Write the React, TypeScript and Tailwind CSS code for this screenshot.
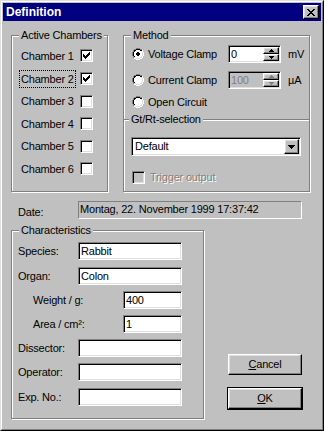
import React from 'react';

const PAL: Record<string, string> = { K: '#000000', G: '#808080', W: '#ffffff', D: '#dfdfdf', w: '#ffffff' };

function Pix({ rows, color }: { rows: string[]; color?: string }) {
  const w = rows[0].length;
  const h = rows.length;
  return (
    <svg width={w} height={h} viewBox={`0 0 ${w} ${h}`} shapeRendering="crispEdges" className="block">
      {rows.flatMap((r, y) =>
        r.split('').map((c, x) => {
          if (c === '.') return null;
          const fill = c === '#' ? color ?? '#000' : PAL[c];
          return <rect key={`${x}-${y}`} x={x} y={y} width="1" height="1" fill={fill} />;
        })
      )}
    </svg>
  );
}

const CHECK = ['......#', '.....##', '#...###', '##.###.', '#####..', '.###...', '..#....'];
const CLOSE_X = ['##....##', '.##..##.', '..####..', '...##...', '..####..', '.##..##.', '##....##'];
const UP = ['..#..', '.###.', '#####'];
const DOWN = ['#####', '.###.', '..#..'];
const COMBO_DOWN = ['#######', '.#####.', '..###..', '...#...'];

const RADIO = [
  '....GGGG....',
  '..GGKKKKGG..',
  '.GKKwwwwKKW.',
  '.GKwwwwwwDW.',
  'GKwwwwwwwwDW',
  'GKwwwwwwwwDW',
  'GKwwwwwwwwDW',
  'GKwwwwwwwwDW',
  '.GKwwwwwwDW.',
  '.GDDwwwwDDW.',
  '..WWDDDDWW..',
  '....WWWW....',
];
const RADIO_ON = RADIO.map((r, y) => {
  const dot: Record<number, string> = { 4: '.KK.', 5: 'KKKK', 6: 'KKKK', 7: '.KK.' };
  if (!dot[y]) return r;
  const d = dot[y];
  return r.slice(0, 4) + d.split('').map((c, i) => (c === 'K' ? 'K' : r[4 + i])).join('') + r.slice(8);
});

const raised =
  'border border-t-white border-l-white border-b-black border-r-black shadow-[inset_-1px_-1px_0_#808080,inset_1px_1px_0_#dfdfdf] bg-[#c0c0c0]';
const sunken =
  'border border-t-[#808080] border-l-[#808080] border-b-white border-r-white shadow-[inset_1px_1px_0_#000,inset_-1px_-1px_0_#dfdfdf]';

function Checkbox({ checked, disabled }: { checked?: boolean; disabled?: boolean }) {
  return (
    <div
      className={`w-[13px] h-[13px] shrink-0 flex items-center justify-center ${sunken} ${
        disabled ? 'bg-[#c0c0c0]' : 'bg-white'
      }`}
    >
      {checked && <Pix rows={CHECK} />}
    </div>
  );
}

function GroupBox({ title, className, children }: { title: string; className?: string; children?: React.ReactNode }) {
  return (
    <div className={`relative border border-[#808080] shadow-[inset_1px_1px_0_#fff,1px_1px_0_#fff] ${className ?? ''}`}>
      <span className="absolute left-[7px] top-[-7px] bg-[#c0c0c0] px-[2px] leading-[13px] whitespace-nowrap">{title}</span>
      {children}
    </div>
  );
}

function Spin({ value, disabled }: { value: string; disabled?: boolean }) {
  return (
    <div className={`w-[53px] h-[18px] flex p-[1px] ${sunken} ${disabled ? 'bg-[#c0c0c0]' : 'bg-white'}`}>
      <span className={`flex-1 pl-[1px] leading-[14px] ${disabled ? 'text-[#808080]' : ''}`}>{value}</span>
      <div className="w-[16px] flex flex-col">
        <div className={`flex-1 flex items-center justify-center ${raised}`}>
          <Pix rows={UP} color={disabled ? '#808080' : '#000'} />
        </div>
        <div className={`flex-1 flex items-center justify-center ${raised}`}>
          <Pix rows={DOWN} color={disabled ? '#808080' : '#000'} />
        </div>
      </div>
    </div>
  );
}

function Field({ value, w }: { value?: string; w: string }) {
  return (
    <div className={`${w} h-[18px] bg-white pl-[2px] leading-[16px] ${sunken}`}>{value}</div>
  );
}

const chambers = [
  { n: 1, on: true },
  { n: 2, on: true, focus: true },
  { n: 3 },
  { n: 4 },
  { n: 5 },
  { n: 6 },
];

export default function App() {
  return (
    <div className="w-[324px] h-[431px] overflow-hidden bg-[#c0c0c0] border border-t-[#dfdfdf] border-l-[#dfdfdf] border-b-black border-r-black font-['Liberation_Sans',Arial,sans-serif] text-[11px] tracking-[-0.2px] text-black">
      <div className="h-full p-px border border-t-white border-l-white border-b-[#808080] border-r-[#808080] flex flex-col">
        {/* title bar */}
        <div className="h-[18px] bg-[#000080] flex items-center justify-between pl-[3px] pr-[2px]">
          <span className="text-white font-bold text-[12px] tracking-normal">Definition</span>
          <div className={`w-[16px] h-[14px] flex items-center justify-center ${raised}`}>
            <Pix rows={CLOSE_X} />
          </div>
        </div>

        <div className="flex flex-col pl-[8px]">
          <div className="mt-[14px] flex">
            <GroupBox title="Active Chambers" className="w-[97px] h-[157px] pt-[8.7px]">
              {chambers.map((c) => (
                <div key={c.n} className="h-[22.6px] flex items-center pl-[9px]">
                  <div className="w-[59px]">
                    {c.focus ? (
                      <span className="-ml-[2px] px-px border border-dotted border-black leading-[16px] inline-block">
                        Chamber {c.n}
                      </span>
                    ) : (
                      <span>Chamber {c.n}</span>
                    )}
                  </div>
                  <Checkbox checked={c.on} />
                </div>
              ))}
            </GroupBox>

            <GroupBox title="Method" className="ml-[15px] w-[187px] h-[157px] pt-[9px]">
              <div className="flex items-center h-[18px] pl-[8px]">
                <Pix rows={RADIO_ON} />
                <span className="ml-[4px] w-[80px]">Voltage Clamp</span>
                <Spin value="0" />
                <span className="ml-[7px]">mV</span>
              </div>
              <div className="mt-[8px] flex items-center h-[18px] pl-[8px]">
                <Pix rows={RADIO} />
                <span className="ml-[4px] w-[80px]">Current Clamp</span>
                <Spin value="100" disabled />
                <span className="ml-[7px]">µA</span>
              </div>
              <div className="mt-[4px] flex items-center h-[18px] pl-[8px]">
                <Pix rows={RADIO} />
                <span className="ml-[4px]">Open Circuit</span>
              </div>

              <div className="relative mt-[8px] border-t border-t-[#808080] border-b border-b-white">
                <span className="absolute left-[5px] top-[-7px] bg-[#c0c0c0] px-[2px] leading-[13px]">Gt/Rt-selection</span>
              </div>

              <div className={`mt-[16px] ml-[7px] w-[170px] h-[19px] bg-white flex p-[1px] ${sunken}`}>
                <span className="flex-1 pl-[2px] leading-[15px]">Default</span>
                <div className={`w-[15px] flex items-center justify-center ${raised}`}>
                  <Pix rows={COMBO_DOWN} />
                </div>
              </div>

              <div className="mt-[13px] flex items-center pl-[8px]">
                <Checkbox disabled />
                <span className="ml-[5px] text-[#808080] [text-shadow:1px_1px_0_#fff]">Trigger output</span>
              </div>
            </GroupBox>
          </div>

          <div className="mt-[9px] flex h-[18px]">
            <span className="w-[67px] pl-[7px] pt-[5px] leading-[13px]">Date:</span>
            <div className="w-[224px] h-[18px] border border-t-[#808080] border-l-[#808080] border-b-white border-r-white pl-px leading-[14px]">
              Montag, 22. November 1999 17:37:42
            </div>
          </div>

          <div className="mt-[11px] flex">
            <GroupBox title="Characteristics" className="w-[193px] h-[189px] pt-[11px]">
              <div className="flex items-center">
                <span className="w-[66px] pl-[6px]">Species:</span>
                <Field value="Rabbit" w="w-[104px]" />
              </div>
              <div className="mt-[7px] flex items-center">
                <span className="w-[66px] pl-[6px]">Organ:</span>
                <Field value="Colon" w="w-[104px]" />
              </div>
              <div className="mt-[6px] flex items-center">
                <span className="w-[111px] pl-[21px]">Weight / g:</span>
                <Field value="400" w="w-[59px]" />
              </div>
              <div className="mt-[6px] flex items-center">
                <span className="w-[111px] pl-[21px]">Area / cm²:</span>
                <Field value="1" w="w-[59px]" />
              </div>
              <div className="mt-[6px] flex items-center">
                <span className="w-[66px] pl-[6px]">Dissector:</span>
                <Field w="w-[104px]" />
              </div>
              <div className="mt-[6px] flex items-center">
                <span className="w-[66px] pl-[6px]">Operator:</span>
                <Field w="w-[104px]" />
              </div>
              <div className="mt-[7px] flex items-center">
                <span className="w-[66px] pl-[6px]">Exp. No.:</span>
                <Field w="w-[104px]" />
              </div>
            </GroupBox>

            <div className="ml-[24px] flex flex-col">
              <button className={`mt-[124px] w-[74px] h-[21px] leading-[17px] text-center ${raised}`}>
                <u>C</u>ancel
              </button>
              <div className="mt-[12px] -ml-px w-[76px] h-[23px] border border-black">
                <button className={`w-full h-full leading-[17px] text-center ${raised}`}>
                  <u>O</u>K
                </button>
              </div>
            </div>
          </div>
        </div>
      </div>
    </div>
  );
}
